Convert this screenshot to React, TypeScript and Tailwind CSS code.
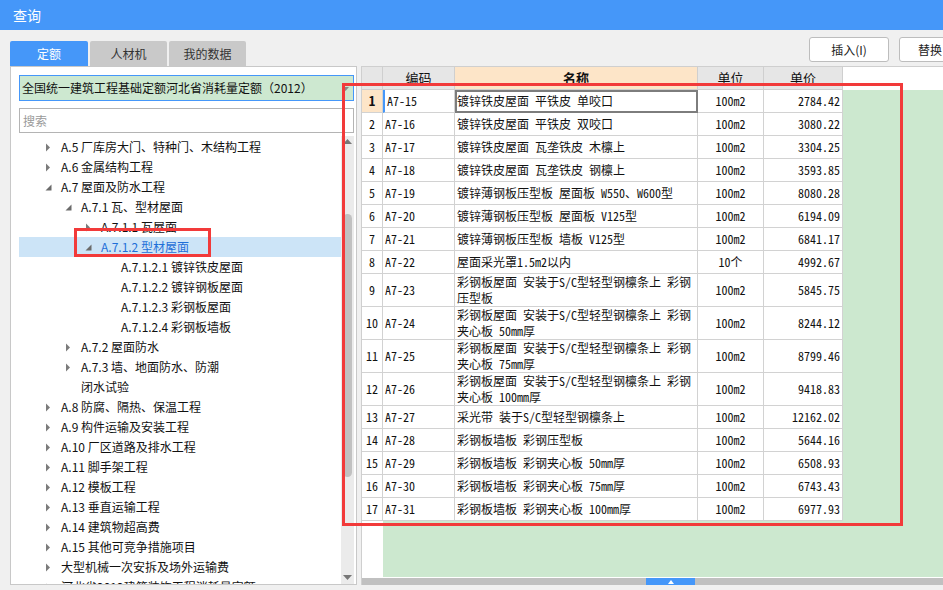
import React from 'react';

type Node = { lvl: 1 | 2 | 3 | 4; st: 'c' | 'e' | 'n'; text: string; line2?: string; sel?: boolean };

const tree: Node[] = [
  { lvl: 1, st: 'c', text: 'A.5 厂库房大门、特种门、木结构工程' },
  { lvl: 1, st: 'c', text: 'A.6 金属结构工程' },
  { lvl: 1, st: 'e', text: 'A.7 屋面及防水工程' },
  { lvl: 2, st: 'e', text: 'A.7.1 瓦、型材屋面' },
  { lvl: 3, st: 'c', text: 'A.7.1.1 瓦屋面' },
  { lvl: 3, st: 'e', text: 'A.7.1.2 型材屋面', sel: true },
  { lvl: 4, st: 'n', text: 'A.7.1.2.1 镀锌铁皮屋面' },
  { lvl: 4, st: 'n', text: 'A.7.1.2.2 镀锌钢板屋面' },
  { lvl: 4, st: 'n', text: 'A.7.1.2.3 彩钢板屋面' },
  { lvl: 4, st: 'n', text: 'A.7.1.2.4 彩钢板墙板' },
  { lvl: 2, st: 'c', text: 'A.7.2 屋面防水' },
  { lvl: 2, st: 'c', text: 'A.7.3 墙、地面防水、防潮', line2: '闭水试验' },
  { lvl: 1, st: 'c', text: 'A.8 防腐、隔热、保温工程' },
  { lvl: 1, st: 'c', text: 'A.9 构件运输及安装工程' },
  { lvl: 1, st: 'c', text: 'A.10 厂区道路及排水工程' },
  { lvl: 1, st: 'c', text: 'A.11 脚手架工程' },
  { lvl: 1, st: 'c', text: 'A.12 模板工程' },
  { lvl: 1, st: 'c', text: 'A.13 垂直运输工程' },
  { lvl: 1, st: 'c', text: 'A.14 建筑物超高费' },
  { lvl: 1, st: 'c', text: 'A.15 其他可竞争措施项目' },
  { lvl: 1, st: 'c', text: '大型机械一次安拆及场外运输费' },
  { lvl: 1, st: 'c', text: '河北省2012建筑装饰工程消耗量定额' },
];

const indent: Record<number, string> = {
  1: 'pl-[26px]',
  2: 'pl-[46px]',
  3: 'pl-[66px]',
  4: 'pl-[86px]',
};

type Row = { code: string; name: string[]; unit: string; price: string };

const rows: Row[] = [
  { code: 'A7-15', name: ['镀锌铁皮屋面 平铁皮 单咬口'], unit: '100m2', price: '2784.42' },
  { code: 'A7-16', name: ['镀锌铁皮屋面 平铁皮 双咬口'], unit: '100m2', price: '3080.22' },
  { code: 'A7-17', name: ['镀锌铁皮屋面 瓦垄铁皮 木檩上'], unit: '100m2', price: '3304.25' },
  { code: 'A7-18', name: ['镀锌铁皮屋面 瓦垄铁皮 钢檩上'], unit: '100m2', price: '3593.85' },
  { code: 'A7-19', name: ['镀锌薄钢板压型板 屋面板 W550、W600型'], unit: '100m2', price: '8080.28' },
  { code: 'A7-20', name: ['镀锌薄钢板压型板 屋面板 V125型'], unit: '100m2', price: '6194.09' },
  { code: 'A7-21', name: ['镀锌薄钢板压型板 墙板 V125型'], unit: '100m2', price: '6841.17' },
  { code: 'A7-22', name: ['屋面采光罩1.5m2以内'], unit: '10个', price: '4992.67' },
  { code: 'A7-23', name: ['彩钢板屋面 安装于S/C型轻型钢檩条上 彩钢', '压型板'], unit: '100m2', price: '5845.75' },
  { code: 'A7-24', name: ['彩钢板屋面 安装于S/C型轻型钢檩条上 彩钢', '夹心板 50mm厚'], unit: '100m2', price: '8244.12' },
  { code: 'A7-25', name: ['彩钢板屋面 安装于S/C型轻型钢檩条上 彩钢', '夹心板 75mm厚'], unit: '100m2', price: '8799.46' },
  { code: 'A7-26', name: ['彩钢板屋面 安装于S/C型轻型钢檩条上 彩钢', '夹心板 100mm厚'], unit: '100m2', price: '9418.83' },
  { code: 'A7-27', name: ['采光带 装于S/C型轻型钢檩条上'], unit: '100m2', price: '12162.02' },
  { code: 'A7-28', name: ['彩钢板墙板 彩钢压型板'], unit: '100m2', price: '5644.16' },
  { code: 'A7-29', name: ['彩钢板墙板 彩钢夹心板 50mm厚'], unit: '100m2', price: '6508.93' },
  { code: 'A7-30', name: ['彩钢板墙板 彩钢夹心板 75mm厚'], unit: '100m2', price: '6743.43' },
  { code: 'A7-31', name: ['彩钢板墙板 彩钢夹心板 100mm厚'], unit: '100m2', price: '6977.93' },
];

function Arrow({ st }: { st: Node['st'] }) {
  if (st === 'c')
    return (
      <svg width="6" height="9" viewBox="0 0 6 9">
        <path d="M1 0.5 L5 4.5 L1 8.5 Z" fill="#7b7b7b" />
      </svg>
    );
  if (st === 'e')
    return (
      <svg width="7" height="7" viewBox="0 0 7 7">
        <path d="M6.5 0.5 L6.5 6.5 L0.5 6.5 Z" fill="#6b6b6b" />
      </svg>
    );
  return null;
}

export default function App() {
  const ui = "font-['Noto_Sans_CJK_SC',sans-serif]";
  const mono = "font-['Noto_Sans_Mono_CJK_SC','Noto_Sans_CJK_SC',monospace]";
  return (
    <div className={`relative w-[943px] h-[590px] overflow-hidden bg-[#f0f0f0] ${ui}`}>
      <div className="h-[30px] bg-[#4597f9] text-white text-[14px] pl-[13px] flex items-center">查询</div>

      <div className="flex">
        {/* left column */}
        <div className="ml-[10px] w-[347px] shrink-0">
          <div className="h-[36px] flex items-end gap-[2px] text-[12px]">
            <div className="w-[78px] h-[25px] bg-[#4597f9] text-white rounded-t-[2px] flex items-center justify-center">定额</div>
            <div className="w-[77px] h-[25px] bg-[#c9c9c9] text-[#333] rounded-t-[2px] flex items-center justify-center">人材机</div>
            <div className="w-[77px] h-[25px] bg-[#c9c9c9] text-[#333] rounded-t-[2px] flex items-center justify-center">我的数据</div>
          </div>
          <div className="h-[519px] bg-white border border-[#c8c8c8] flex flex-col">
            <div className="mt-[8px] ml-[8px] w-[335px] h-[26px] bg-[#cde8d0] border border-[#4597f9] flex items-center pl-[2px] text-[12px] text-[#111] relative">
              全国统一建筑工程基础定额河北省消耗量定额（2012）
              <svg className="absolute right-[4px] top-[11px]" width="7" height="4" viewBox="0 0 7 4">
                <path d="M0 0 L7 0 L3.5 4 Z" fill="#888" />
              </svg>
            </div>
            <div className="mt-[7px] ml-[8px] w-[335px] h-[25px] border border-[#b4b4b4] flex items-center pl-[3px] text-[12px] text-[#9a9a9a]">
              搜索
            </div>
            <div className="mt-[3px] flex flex-1 min-h-0">
              <div className="ml-[8px] w-[322px] overflow-hidden text-[12px] leading-[20px] pt-[1px]">
                {tree.map((n, i) => (
                  <div
                    key={i}
                    className={`flex items-start ${indent[n.lvl]} ${n.sel ? 'bg-[#cce4f7] text-[#1f6fd8]' : 'text-[#111]'}`}
                  >
                    <div className="w-[16px] h-[20px] flex items-center">
                      <Arrow st={n.st} />
                    </div>
                    <div className="whitespace-nowrap">
                      {n.text}
                      {n.line2 && <div>{n.line2}</div>}
                    </div>
                  </div>
                ))}
              </div>
              <div className="w-[13px] bg-[#ebebeb] flex flex-col items-center pt-[3px] pb-[4px]">
                <svg width="9" height="5" viewBox="0 0 9 5">
                  <path d="M0 5 L4.5 0 L9 5 Z" fill="#777" />
                </svg>
                <div className="mt-[70px] w-[9px] h-[263px] rounded-full bg-[#c1c1c1]" />
                <div className="flex-1" />
                <svg width="9" height="5" viewBox="0 0 9 5">
                  <path d="M0 0 L4.5 5 L9 0 Z" fill="#777" />
                </svg>
              </div>
            </div>
          </div>
        </div>

        {/* right column */}
        <div className="ml-[4px] flex-1 min-w-0">
          <div className="h-[36px] pt-[7px] flex text-[12px] text-[#222]">
            <div className="ml-[448px] w-[80px] h-[25px] shrink-0 bg-white border border-[#bdbdbd] rounded-[3px] flex items-center justify-center">插入(I)</div>
            <div className="ml-[10px] w-[60px] h-[25px] shrink-0 bg-white border border-[#bdbdbd] rounded-[3px] flex items-center pl-[18px]">替换</div>
          </div>
          <div className="h-[519px] bg-white border-t border-[#cfcfcf] border-l flex flex-col">
            {/* header */}
            <div className="h-[23px] flex text-[13px] text-[#111] bg-white">
              <div className="w-[21px] bg-[#e6e6e6] border-r border-b border-[#cfcfcf]" />
              <div className="w-[72px] bg-[#e6e6e6] border-r border-b border-[#cfcfcf] flex items-center justify-center">编码</div>
              <div className="w-[243px] bg-[#fde5c8] border-r border-b border-[#cfcfcf] flex items-center justify-center font-bold">名称</div>
              <div className="w-[66px] bg-[#e6e6e6] border-r border-b border-[#cfcfcf] flex items-center justify-center">单位</div>
              <div className="w-[79px] bg-[#e6e6e6] border-r border-b border-[#cfcfcf] flex items-center justify-center">单价</div>
            </div>
            {/* body */}
            <div className={`flex-1 bg-[linear-gradient(to_right,#ffffff_21px,#cce8cf_21px)] text-[12px] text-[#111] ${mono}`}>
              {rows.map((r, i) => {
                const h = r.name.length > 1 ? 'h-[33px]' : 'h-[23px]';
                const first = i === 0;
                return (
                  <div key={i} className={`flex ${h} bg-white w-[481px]`}>
                    <div
                      className={`w-[21px] border-r border-b border-[#d2d2d2] flex items-center justify-center ${
                        first ? 'bg-[#fde5c8] font-bold text-[13px]' : ''
                      }`}
                    >
                      {i + 1}
                    </div>
                    <div
                      className={`w-[72px] border-r border-b border-[#d2d2d2] flex items-center pl-[2px] ${
                        first ? 'border-l-2 border-l-[#4597f9]' : ''
                      }`}
                    >
                      {r.code}
                    </div>
                    <div
                      className={`w-[243px] border-r border-b border-[#d2d2d2] flex flex-col justify-center pl-[2px] leading-[16px] whitespace-nowrap ${
                        first ? 'outline-2 -outline-offset-2 outline-[#7d7d7d]' : ''
                      }`}
                    >
                      {r.name.map((l, k) => (
                        <div key={k}>{l}</div>
                      ))}
                    </div>
                    <div className="w-[66px] border-r border-b border-[#d2d2d2] flex items-center justify-center">{r.unit}</div>
                    <div className="w-[79px] border-r border-b border-[#d2d2d2] flex items-center justify-end pr-[2px]">{r.price}</div>
                  </div>
                );
              })}
            </div>
            {/* bottom scrollbar */}
            <div className="h-[8px] border-t border-white bg-[#c0c0c0] flex">
              <div className="ml-[284px] w-[49px] h-full bg-[#4597f9] flex items-center justify-center">
                <svg width="6" height="4" viewBox="0 0 6 4">
                  <path d="M0 4 L3 0 L6 4 Z" fill="#fff" />
                </svg>
              </div>
            </div>
          </div>
        </div>
      </div>

      {/* red highlight boxes */}
      <div className="absolute left-[342px] top-[83px] w-[561px] h-[443px] border-[3px] border-[#f23a3a]" />
      <div className="absolute left-[74px] top-[228px] w-[137px] h-[29px] border-[3px] border-[#f23a3a]" />
    </div>
  );
}
